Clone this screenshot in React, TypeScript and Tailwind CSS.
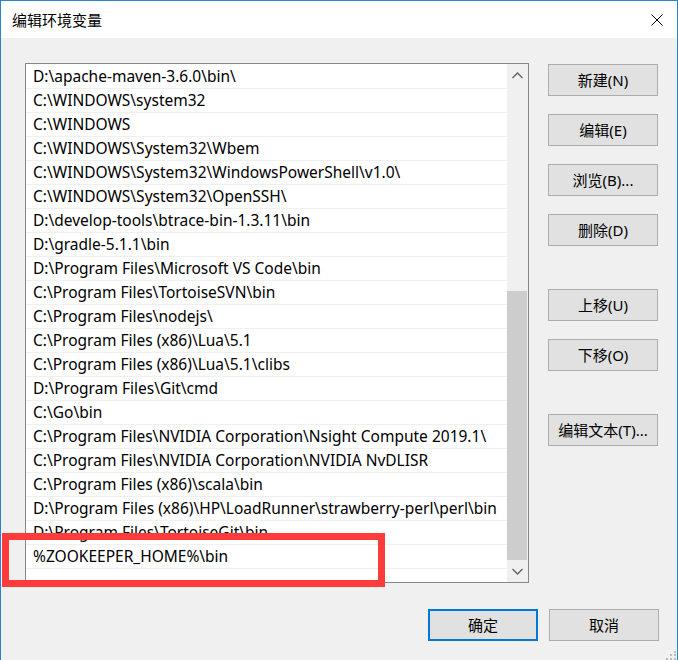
import React from "react";

const paths = [
  "D:\\apache-maven-3.6.0\\bin\\",
  "C:\\WINDOWS\\system32",
  "C:\\WINDOWS",
  "C:\\WINDOWS\\System32\\Wbem",
  "C:\\WINDOWS\\System32\\WindowsPowerShell\\v1.0\\",
  "C:\\WINDOWS\\System32\\OpenSSH\\",
  "D:\\develop-tools\\btrace-bin-1.3.11\\bin",
  "D:\\gradle-5.1.1\\bin",
  "D:\\Program Files\\Microsoft VS Code\\bin",
  "C:\\Program Files\\TortoiseSVN\\bin",
  "C:\\Program Files\\nodejs\\",
  "C:\\Program Files (x86)\\Lua\\5.1",
  "C:\\Program Files (x86)\\Lua\\5.1\\clibs",
  "D:\\Program Files\\Git\\cmd",
  "C:\\Go\\bin",
  "C:\\Program Files\\NVIDIA Corporation\\Nsight Compute 2019.1\\",
  "C:\\Program Files\\NVIDIA Corporation\\NVIDIA NvDLISR",
  "C:\\Program Files (x86)\\scala\\bin",
  "D:\\Program Files (x86)\\HP\\LoadRunner\\strawberry-perl\\perl\\bin",
  "D:\\Program Files\\TortoiseGit\\bin",
  "%ZOOKEEPER_HOME%\\bin",
  "",
];

const font = { fontFamily: '"Noto Sans", "Noto Sans CJK SC", sans-serif' };

function Btn({ label, primary }: { label: string; primary?: boolean }) {
  return (
    <button
      className={
        primary
          ? "w-[110px] h-[32px] bg-[#e1e1e1] border-2 border-[#0078d7] text-[15px] text-black"
          : "w-[110px] h-[32px] bg-[#e1e1e1] border border-[#adadad] text-[15px] text-black"
      }
      style={font}
    >
      {label}
    </button>
  );
}

function Chevron({ up }: { up?: boolean }) {
  return (
    <svg width="11" height="7" viewBox="0 0 11 7">
      <path
        d={up ? "M0.5 6 L5.5 1 L10.5 6" : "M0.5 1 L5.5 6 L10.5 1"}
        fill="none"
        stroke="#606060"
        strokeWidth="1.3"
      />
    </svg>
  );
}

export default function App() {
  return (
    <div className="relative w-[678px] h-[660px] overflow-hidden bg-white" style={font}>
      <div className="flex flex-col w-[678px] h-[680px] border border-[#2a84d2]">
        {/* title bar */}
        <div className="h-[37px] bg-white flex items-center justify-between pl-[11px] pr-[14px]">
          <span
            className="text-[15px] text-black pt-[1px]"
            style={{ fontFamily: '"Noto Sans CJK SC", sans-serif' }}
          >
            编辑环境变量
          </span>
          <svg width="12" height="12" viewBox="0 0 12 12">
            <path d="M0.5 0.5 L11.5 11.5 M11.5 0.5 L0.5 11.5" stroke="#000" strokeWidth="1" />
          </svg>
        </div>

        <div className="flex-1 bg-[#f0f0f0] pl-[24px] pt-[25px]">
          <div className="flex">
            {/* list box */}
            <div className="w-[504px] h-[520px] border border-[#828790] bg-white flex">
              <div className="flex-1 flex flex-col overflow-hidden">
                {paths.map((p, i) => (
                  <div
                    key={i}
                    className={
                      i === 0
                        ? "h-[24px] shrink-0 flex items-center pl-[7px] pt-[1px] text-[15.5px] text-black whitespace-nowrap"
                        : "h-[24px] shrink-0 flex items-center pl-[7px] pt-[1px] text-[15.5px] text-black whitespace-nowrap border-t border-[#f0f0f0]"
                    }
                  >
                    {p}
                  </div>
                ))}
              </div>
              <div className="w-[21px] bg-[#f0f0f0] flex flex-col">
                <div className="h-[22px] flex items-center justify-center">
                  <Chevron up />
                </div>
                <div className="h-[205px]" />
                <div className="h-[269px] w-[20px] bg-[#cdcdcd]" />
                <div className="h-[22px] flex items-center justify-center">
                  <Chevron />
                </div>
              </div>
            </div>

            {/* side buttons */}
            <div className="ml-[19px] mt-[1px] flex flex-col">
              <div className="flex flex-col gap-[18px]">
                <Btn label="新建(N)" />
                <Btn label="编辑(E)" />
                <Btn label="浏览(B)..." />
                <Btn label="删除(D)" />
              </div>
              <div className="flex flex-col gap-[18px] mt-[43px]">
                <Btn label="上移(U)" />
                <Btn label="下移(O)" />
              </div>
              <div className="mt-[43px]">
                <Btn label="编辑文本(T)..." />
              </div>
            </div>
          </div>

          <div className="flex justify-end gap-[11px] mt-[26px] pr-[18px]">
            <Btn label="确定" primary />
            <Btn label="取消" />
          </div>
        </div>
      </div>

      {/* highlight box */}
      <div className="absolute left-[2px] top-[533px] w-[383px] h-[54px] border-[7px] border-[#ff3b3b]" />

      {/* resize grip */}
      <svg className="absolute right-[1px] bottom-0" width="14" height="9" viewBox="0 0 14 9">
        <rect x="11" y="0" width="2" height="2" fill="#bcbcbc" />
        <rect x="7" y="3" width="2" height="2" fill="#bcbcbc" />
        <rect x="11" y="3" width="2" height="2" fill="#bcbcbc" />
        <rect x="3" y="7" width="2" height="2" fill="#bcbcbc" />
        <rect x="7" y="7" width="2" height="2" fill="#bcbcbc" />
        <rect x="11" y="7" width="2" height="2" fill="#bcbcbc" />
      </svg>
    </div>
  );
}
